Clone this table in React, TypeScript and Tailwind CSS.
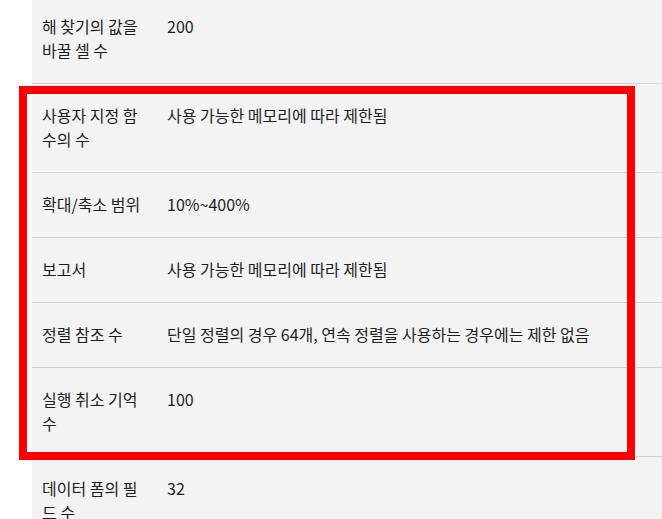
const rows = [
  { label: "해 찾기의 값을 바꿀 셀 수", value: "200" },
  { label: "사용자 지정 함수의 수", value: "사용 가능한 메모리에 따라 제한됨" },
  { label: "확대/축소 범위", value: "10%~400%" },
  { label: "보고서", value: "사용 가능한 메모리에 따라 제한됨" },
  { label: "정렬 참조 수", value: "단일 정렬의 경우 64개, 연속 정렬을 사용하는 경우에는 제한 없음" },
  { label: "실행 취소 기억 수", value: "100" },
  { label: "데이터 폼의 필드 수", value: "32" },
];

export default function App() {
  return (
    <div className="relative h-[519px] w-[662px] overflow-hidden bg-white font-['Noto_Sans_CJK_KR',sans-serif] text-[16px] leading-6 text-[#1e1e1e]">
      <div className="-mt-[5px] ml-[32px] bg-[#f3f3f3]">
        {rows.map((r) => (
          <div key={r.label} className="flex border-b border-[#d2d2d2] pt-[19px] pb-[21px]">
            <div className="w-[125px] shrink-0 pl-[10px] pr-[10px]">{r.label}</div>
            <div className="pl-[10px]">{r.value}</div>
          </div>
        ))}
      </div>
      {/* highlight box */}
      <div className="absolute left-[19px] top-[86px] h-[374px] w-[616px] border-8 border-[#ff0000]" />
    </div>
  );
}
